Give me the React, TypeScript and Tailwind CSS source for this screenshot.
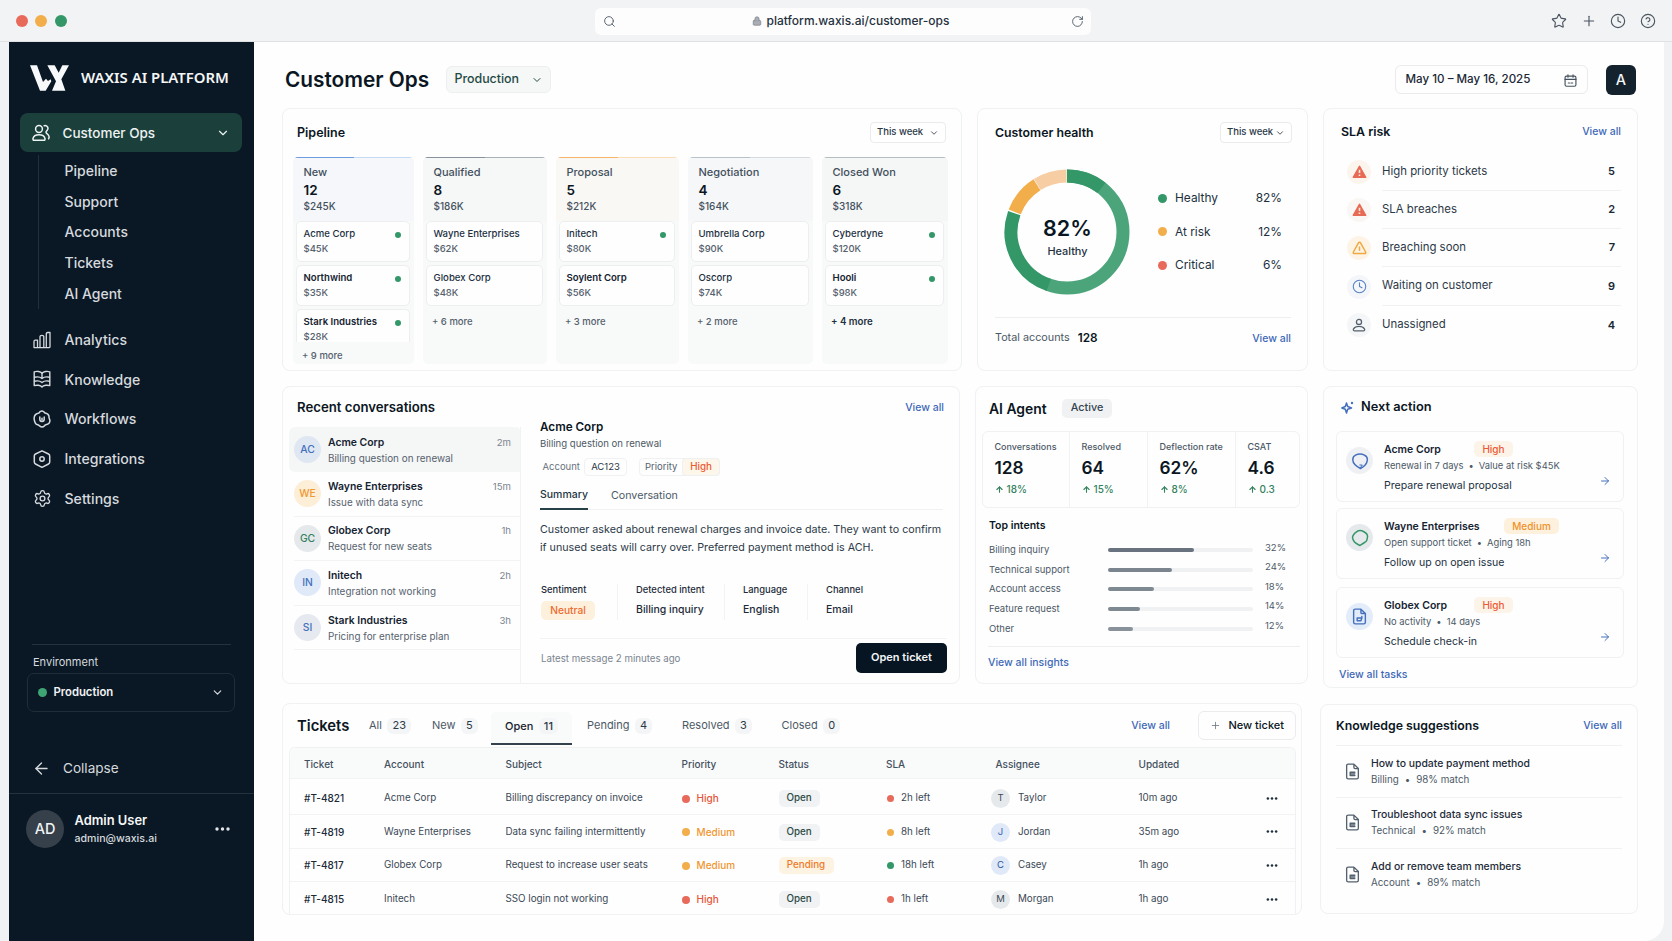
import type { ReactNode } from "react";
import {
  ArrowLeft,
  ArrowRight,
  ArrowUp,
  ChevronDown,
  CircleHelp,
  Clock,
  Lock,
  Plus,
  RotateCw,
  Search,
  Settings,
  Star,
} from "lucide-react";

const stages = [
  {
    name: "New",
    count: 12,
    total: "$245K",
    line: "bg-gradient-to-r from-[#6f9be0] from-50% to-[#c5daf5] to-50%",
    head: "bg-[#f5f7fa]",
    deals: [
      { name: "Acme Corp", value: "$45K", dot: true, strong: false },
      { name: "Northwind", value: "$35K", dot: true, strong: true },
      { name: "Stark Industries", value: "$28K", dot: true, strong: true },
    ],
    more: "+ 9 more",
  },
  {
    name: "Qualified",
    count: 8,
    total: "$186K",
    line: "bg-gradient-to-r from-[#87929c] from-50% to-[#a9b1b8] to-50%",
    head: "bg-[#f6f7f7]",
    deals: [
      { name: "Wayne Enterprises", value: "$62K", dot: false, strong: false },
      { name: "Globex Corp", value: "$48K", dot: false, strong: false },
    ],
    more: "+ 6 more",
  },
  {
    name: "Proposal",
    count: 5,
    total: "$212K",
    line: "bg-gradient-to-r from-[#f7b56a] from-50% to-[#fbdcb5] to-50%",
    head: "bg-[#faf8f4]",
    deals: [
      { name: "Initech", value: "$80K", dot: true, strong: false },
      { name: "Soylent Corp", value: "$56K", dot: false, strong: true },
    ],
    more: "+ 3 more",
  },
  {
    name: "Negotiation",
    count: 4,
    total: "$164K",
    line: "bg-gradient-to-r from-[#b9c2c9] from-50% to-[#d5dade] to-50%",
    head: "bg-[#f6f7f8]",
    deals: [
      { name: "Umbrella Corp", value: "$90K", dot: false, strong: false },
      { name: "Oscorp", value: "$74K", dot: false, strong: false },
    ],
    more: "+ 2 more",
  },
  {
    name: "Closed Won",
    count: 6,
    total: "$318K",
    line: "bg-[#b4bfc2]",
    head: "bg-[#f5f6f6]",
    deals: [
      { name: "Cyberdyne", value: "$120K", dot: true, strong: false },
      { name: "Hooli", value: "$98K", dot: true, strong: true },
    ],
    more: "+ 4 more",
  },
];

const health = [
  { label: "Healthy", value: "82%", color: "bg-[#339768]" },
  { label: "At risk", value: "12%", color: "bg-[#f2ae4b]" },
  { label: "Critical", value: "6%", color: "bg-[#e76a5a]" },
];

const slaRows = [
  { label: "High priority tickets", value: 5, icon: "alert", bg: "bg-[#fbf5ee]" },
  { label: "SLA breaches", value: 2, icon: "alert", bg: "bg-[#faf6f3]" },
  { label: "Breaching soon", value: 7, icon: "warn", bg: "bg-[#fdf4e6]" },
  { label: "Waiting on customer", value: 9, icon: "clock", bg: "bg-[#f4f6f9]" },
  { label: "Unassigned", value: 4, icon: "user", bg: "bg-[#f5f6f7]" },
];

const conversations = [
  { initials: "AC", name: "Acme Corp", text: "Billing question on renewal", time: "2m", color: "bg-[#dfe7f2] text-[#4470bd]" },
  { initials: "WE", name: "Wayne Enterprises", text: "Issue with data sync", time: "15m", color: "bg-[#fdeed8] text-[#f0982f]" },
  { initials: "GC", name: "Globex Corp", text: "Request for new seats", time: "1h", color: "bg-[#e6e9eb] text-[#35805f]" },
  { initials: "IN", name: "Initech", text: "Integration not working", time: "2h", color: "bg-[#dfe9f8] text-[#4470bd]" },
  { initials: "SI", name: "Stark Industries", text: "Pricing for enterprise plan", time: "3h", color: "bg-[#e6eaf0] text-[#4470bd]" },
];

const agentStats = [
  { label: "Conversations", value: "128", delta: "18%" },
  { label: "Resolved", value: "64", delta: "15%" },
  { label: "Deflection rate", value: "62%", delta: "8%" },
  { label: "CSAT", value: "4.6", delta: "0.3" },
];

const intents = [
  { label: "Billing inquiry", value: 32, width: 59, color: "bg-[#69737f]" },
  { label: "Technical support", value: 24, width: 44, color: "bg-[#7b858f]" },
  { label: "Account access", value: 18, width: 31.5, color: "bg-[#7f8992]" },
  { label: "Feature request", value: 14, width: 22, color: "bg-[#7f8992]" },
  { label: "Other", value: 12, width: 17, color: "bg-[#89929b]" },
];

const tickets = [
  { id: "#T-4821", account: "Acme Corp", subject: "Billing discrepancy on invoice", priority: "High", status: "Open", sla: "2h left", slaColor: "bg-[#e76a5a]", who: "Taylor", updated: "10m ago", avatar: "bg-[#e6e9ec] text-[#3b4856]" },
  { id: "#T-4819", account: "Wayne Enterprises", subject: "Data sync failing intermittently", priority: "Medium", status: "Open", sla: "8h left", slaColor: "bg-[#f2ae4b]", who: "Jordan", updated: "35m ago", avatar: "bg-[#dfe9f8] text-[#3b68b8]" },
  { id: "#T-4817", account: "Globex Corp", subject: "Request to increase user seats", priority: "Medium", status: "Pending", sla: "18h left", slaColor: "bg-[#339768]", who: "Casey", updated: "1h ago", avatar: "bg-[#dfe9f8] text-[#2d559c]" },
  { id: "#T-4815", account: "Initech", subject: "SSO login not working", priority: "High", status: "Open", sla: "1h left", slaColor: "bg-[#e76a5a]", who: "Morgan", updated: "1h ago", avatar: "bg-[#e6e9ec] text-[#3b4856]" },
];

const articles = [
  { title: "How to update payment method", meta: "Billing", match: "98% match" },
  { title: "Troubleshoot data sync issues", meta: "Technical", match: "92% match" },
  { title: "Add or remove team members", meta: "Account", match: "89% match" },
];

function Card({ className, children }: { className: string; children: ReactNode }) {
  return (
    <section className={`shrink-0 rounded-[8px] border border-[#eff1f2] bg-[#fefefe] ${className}`}>
      {children}
    </section>
  );
}

function ViewAll({ children = "View all" }: { children?: ReactNode }) {
  return <a className="block text-[10.5px] font-medium leading-4 text-[#4069b8]">{children}</a>;
}

function WeekSelect({ className }: { className: string }) {
  return (
    <button
      className={`mb-px flex h-[21px] items-center justify-between rounded-[4px] border border-[#e9ebed] bg-white pl-[6px] pr-[6px] text-[9.5px] font-medium text-[#2c3947] ${className}`}
    >
      This week
      <ChevronDown size={10} strokeWidth={2} />
    </button>
  );
}

/* icons */

function Logo() {
  return (
    <svg width="39" height="26" viewBox="0 0 117 76" fill="#f8f9fa">
      <path d="M0 0H21L39 50L48 40L54 47L62 42L64 48L47 76H30Z" />
      <path d="M52 0H74L86 22L97 0H117L94 42L106 76H66L78 48Z" />
    </svg>
  );
}

function StrokeIcon({ size = 18, width = 1.5, children }: { size?: number; width?: number; children: ReactNode }) {
  return (
    <svg
      width={size}
      height={size}
      viewBox="0 0 18 18"
      fill="none"
      stroke="currentColor"
      strokeWidth={width}
      strokeLinecap="round"
      strokeLinejoin="round"
    >
      {children}
    </svg>
  );
}

function UsersIcon() {
  return (
    <StrokeIcon>
      <circle cx="7" cy="5" r="3.4" />
      <path d="M2.3 16.3C1 16.3 .8 15.5 1 14.5C1.6 11.9 3.9 10.8 7 10.8S12.4 11.9 13 14.5C13.2 15.5 13 16.3 11.7 16.3Z" />
      <path d="M12.2 1.8C14 1.2 16 2.3 16 4.3C16 6 14.7 6.6 14.2 7.5C13.7 8.5 14.5 9.4 15.5 10.1C17 11.2 17.6 13.5 16.6 14.8" />
    </StrokeIcon>
  );
}

function AnalyticsIcon() {
  return (
    <StrokeIcon width={1.3}>
      <path d="M1 16.5V10.5C1 9.7 1.5 9.2 2.3 9.2H4.5V16.5M7 16.5V5.5C7 3.9 10.8 3.9 10.8 5.5V16.5M13.3 16.5V2.8C13.3 2 13.9 1.5 14.7 1.5H17V15.5C17 16.2 16.6 16.7 15.9 16.7H2.2C1.5 16.7 1 16.3 1 15.5" />
    </StrokeIcon>
  );
}

function KnowledgeIcon() {
  return (
    <StrokeIcon width={1.4}>
      <path d="M9 3.2C7.5 1.3 3.5 1 1.2 1.8V15.6C3.5 14.9 7.5 15 9 17C10.5 15 14.5 14.9 16.8 15.6V1.8C14.5 1 10.5 1.3 9 3.2Z" />
      <path d="M9 3.2V8.5M1.5 7.2C4 6.6 7.3 7 9 8.5C10.7 7 14 6.6 16.5 7.2M1.5 11.2C4 10.6 7.3 11 9 12.5C10.7 11 14 10.6 16.5 11.2" />
    </StrokeIcon>
  );
}

function WorkflowsIcon() {
  return (
    <StrokeIcon width={1.5}>
      <path d="M6 3C6.5 1.5 8 .8 9.2 .9C10.6 1 11.3 2 12 3C13.6 3.2 15.5 4 15.9 6C16.1 7 15.8 7.8 16.3 8.7C17 10 17 12 16 13.2C15 14.4 13.6 14.6 12.4 14.9C11.5 15.4 11 17 9 17.1C7.3 17.1 6.6 15.6 5.4 15C3.5 14.6 2.2 13.6 1.8 11.8C1.5 10.6 1 9.5 1.1 8C1.3 5.2 3.5 3.4 6 3Z" />
      <path d="M6.8 7V9.3C6.8 12.2 11.2 12.2 11.2 9.3V7M9 8.2V9.8" />
    </StrokeIcon>
  );
}

function IntegrationsIcon() {
  return (
    <StrokeIcon width={1.5}>
      <path d="M9 .8L15.5 4C16.3 4.4 16.7 5 16.7 5.9V12.1C16.7 13 16.3 13.6 15.5 14L9 17.3L2.5 14C1.7 13.6 1.3 13 1.3 12.1V5.9C1.3 5 1.7 4.4 2.5 4Z" />
      <circle cx="9" cy="9" r="2.2" />
    </StrokeIcon>
  );
}

function CalendarIcon() {
  return (
    <StrokeIcon size={13} width={1.6}>
      <rect x="1.5" y="3" width="15" height="14" rx="2" />
      <path d="M1.5 7.5H16.5M5.5 1V4.5M12.5 1V4.5M6 12.5H7.5M9.5 12.5H12" />
    </StrokeIcon>
  );
}

function AlertIcon() {
  return (
    <svg width="15" height="14" viewBox="0 0 15 14">
      <path d="M7.5 1.3L13.7 12.3H1.3Z" fill="#e76a55" stroke="#e76a55" strokeWidth="1.5" strokeLinejoin="round" />
      <path d="M7.5 4.8V8M7.5 9.6V11" stroke="#fbe9dd" strokeWidth="1.6" />
    </svg>
  );
}

function WarnIcon() {
  return (
    <svg width="15" height="14" viewBox="0 0 15 14" fill="none" stroke="#f0a93f" strokeWidth="1.5" strokeLinejoin="round">
      <path d="M6.6 1.7C7 1 8 1 8.4 1.7L13.6 11C14 11.8 13.6 12.5 12.8 12.5H2.2C1.4 12.5 1 11.8 1.4 11Z" />
      <path d="M7.5 5.5V9.8" />
    </svg>
  );
}

function UserIcon() {
  return (
    <StrokeIcon size={14} width={1.6}>
      <circle cx="9" cy="5" r="3.3" />
      <path d="M3 16.5C1.5 16.5 1.5 15 2 14C3.3 11.8 5.5 10.8 9 10.8S14.7 11.8 16 14C16.5 15 16.5 16.5 15 16.5Z" />
    </StrokeIcon>
  );
}

function ShieldIcon() {
  return (
    <StrokeIcon size={18} width={1.5}>
      <path d="M4.5 3.2C7 1.8 11 1.8 13.5 3.2C15.8 4.2 16.6 5.5 16.3 8C16.1 11.5 14.5 14 9.5 16.5C4.5 14 2 12 1.8 8C1.7 5.5 2.5 4.2 4.5 3.2Z" />
      <path d="M8.8 13H11.3L9.5 15.5" strokeWidth="1" />
    </StrokeIcon>
  );
}

function BubbleIcon() {
  return (
    <StrokeIcon size={18} width={1.5}>
      <path d="M5.5 2.8C7.5 1.3 10.5 1.3 12.5 2.5C15 3.8 16.8 6 16.5 8C16 9.5 16.5 11 15 12.5C13 14 11 15 9 16.5C7 15.5 5 14.8 3.5 13C2.5 11.5 1.5 10 1.5 8.5C1.5 6 3.5 4.3 5.5 2.8Z" />
    </StrokeIcon>
  );
}

function FileIcon({ size, width = 1.5, children }: { size: number; width?: number; children: ReactNode }) {
  return (
    <StrokeIcon size={size} width={width}>
      <path d="M10.5 1.2H4.5C3.5 1.2 2.8 1.9 2.8 2.9V15.1C2.8 16.1 3.5 16.8 4.5 16.8H13.5C14.5 16.8 15.2 16.1 15.2 15.1V5.9L10.5 1.2V4.7C10.5 5.5 11 5.9 11.7 5.9H15.2" />
      {children}
    </StrokeIcon>
  );
}

function SparkIcon() {
  return (
    <svg width="13" height="13" viewBox="0 0 13 13" fill="none" stroke="#4470bd" strokeWidth="1.5" strokeLinejoin="round">
      <path d="M5.5 2L6.7 5.5L10.5 7L6.7 8.3L5.5 12L4.3 8.3L.8 7L4.3 5.5Z" />
      <circle cx="11" cy="2" r="1.2" fill="#4470bd" stroke="none" />
    </svg>
  );
}

function Dots({ className }: { className: string }) {
  return (
    <svg width="15" height="4" viewBox="0 0 15 4" fill="currentColor" className={className}>
      <circle cx="2" cy="2" r="1.7" />
      <circle cx="7.5" cy="2" r="1.7" />
      <circle cx="13" cy="2" r="1.7" />
    </svg>
  );
}

const navItems = [
  { name: "Analytics", icon: <AnalyticsIcon /> },
  { name: "Knowledge", icon: <KnowledgeIcon /> },
  { name: "Workflows", icon: <WorkflowsIcon /> },
  { name: "Integrations", icon: <IntegrationsIcon /> },
  { name: "Settings", icon: <Settings size={19} strokeWidth={1.7} /> },
];

function BrowserBar() {
  return (
    <header className="flex h-[42px] items-center border-b border-[#dfe1e3] bg-[#f2f3f4]">
      <div className="flex w-[595px] gap-[7.5px] pl-[15.5px]">
        <span className="size-[12px] rounded-full bg-[#e76a5a]" />
        <span className="size-[12px] rounded-full bg-[#f2ae4b]" />
        <span className="size-[12px] rounded-full bg-[#339768]" />
      </div>
      <div className="mt-px flex h-[27px] w-[496px] items-center rounded-[6px] bg-[#fdfdfd] pl-[8px] pr-[7px] text-[#4f5a66]">
        <Search size={13} strokeWidth={1.7} />
        <div className="flex flex-1 items-center justify-center gap-[5px] pl-[14px]">
          <Lock size={10} strokeWidth={2} className="fill-[#a9aeb4] text-[#858c94]" />
          <span className="text-[12px] font-medium text-[#25313e]">platform.waxis.ai/customer-ops</span>
        </div>
        <RotateCw size={13} strokeWidth={1.7} />
      </div>
      <div className="ml-auto flex items-center gap-[13.7px] pr-[16px] text-[#4b5561]">
        <Star size={16} strokeWidth={1.7} />
        <Plus size={16} strokeWidth={1.7} />
        <Clock size={16} strokeWidth={1.7} />
        <CircleHelp size={16} strokeWidth={1.7} />
      </div>
    </header>
  );
}

function Sidebar() {
  return (
    <aside className="flex w-[245px] shrink-0 flex-col bg-[#0a1825] text-[#d6dade]">
      <div className="flex h-[71px] items-center gap-[12px] pl-[21px]">
        <Logo />
        <span className="font-['Noto_Sans'] text-[14.9px] font-semibold text-[#f4f6f7]">WAXIS AI PLATFORM</span>
      </div>
      <button className="mx-[11px] flex h-[39px] w-[222px] items-center rounded-[8px] bg-[#1b403b] pl-[12px] pr-[12px] text-[#eef2f2]">
        <UsersIcon />
        <span className="ml-[12.5px] pt-px text-[13.5px] font-medium">Customer Ops</span>
        <ChevronDown size={14} strokeWidth={2} className="ml-auto" />
      </button>
      <div className="ml-[29px] mt-[3px] flex h-[154px] border-l border-[#22303c] pl-[25.5px]">
        <ul className="text-[14px] font-medium">
          {["Pipeline", "Support", "Accounts", "Tickets", "AI Agent"].map((item) => (
            <li key={item} className="flex h-[30.8px] items-center">
              {item}
            </li>
          ))}
        </ul>
      </div>
      <nav className="mt-[11px] text-[14.1px] font-medium">
        {navItems.map((item) => (
          <a key={item.name} className="flex h-[39.6px] items-center pl-[24px]">
            <span className="flex w-[31.5px]">{item.icon}</span>
            {item.name}
          </a>
        ))}
      </nav>

      <div className="mx-[23px] mt-auto border-t border-[#24323e] pl-px pt-[9px] text-[11px] leading-4">Environment</div>
      <button className="ml-[18px] mt-[3px] flex h-[39px] w-[208px] items-center rounded-[7px] border border-[#1f2d39] pl-[10px] pr-[10px]">
        <span className="size-[9px] rounded-full bg-[#3fa474]" />
        <span className="ml-[6.5px] text-[11.3px] font-semibold text-[#f1f3f4]">Production</span>
        <ChevronDown size={13} strokeWidth={2.2} className="ml-auto" />
      </button>
      <button className="mt-[37px] flex h-[39px] items-center pl-[23px] text-[13.6px]">
        <ArrowLeft size={19} strokeWidth={1.7} />
        <span className="ml-[12px]">Collapse</span>
      </button>
      <div className="mt-[5px] flex h-[148px] items-start border-t border-[#24323e] pl-[17px] pt-[16px]">
        <span className="flex size-[38px] items-center justify-center rounded-full bg-[#36404b] text-[14.5px] font-medium text-[#f1f3f4]">
          AD
        </span>
        <div className="ml-[10.5px] pt-[2px]">
          <p className="text-[12.9px] font-semibold leading-[18px] text-[#f4f6f7]">Admin User</p>
          <p className="text-[10.6px] font-medium leading-[18px]">admin@waxis.ai</p>
        </div>
        <Dots className="ml-auto mr-[24px] mt-[17px] text-[#e3e6e8]" />
      </div>
    </aside>
  );
}

function Pipeline() {
  return (
    <Card className="h-[263px] w-[680px] pl-[10px]">
      <div className="flex h-[48px] items-center justify-between pl-[4px] pr-[15px]">
        <h2 className="text-[12.5px] font-semibold">Pipeline</h2>
        <WeekSelect className="w-[76px]" />
      </div>
      <div className="grid h-[207px] grid-cols-[121px_124px_123px_125px_126px] gap-[9px]">
        {stages.map((stage) => (
          <div key={stage.name} className="flex flex-col overflow-hidden rounded-[5px] bg-[#f8f9f9]">
            <div className={`h-px shrink-0 ${stage.line}`} />
            <div className={`h-[63px] shrink-0 pl-[10.5px] pt-[6px] ${stage.head}`}>
              <p className="text-[11px] font-medium leading-4 text-[#42505d]">{stage.name}</p>
              <p className="mt-px text-[13.5px] font-semibold leading-[18px]">{stage.count}</p>
              <p className="text-[10px] font-medium leading-[14px] text-[#44515e]">{stage.total}</p>
            </div>
            <div className="flex flex-col gap-[3px] overflow-hidden pl-[3px] pr-[4px]">
              {stage.deals.map((deal, i) => (
                <div
                  key={deal.name}
                  className={
                    i === 2
                      ? "h-[33px] rounded-t-[5px] border border-b-0 border-[#eceef0] bg-[#fefefe] pl-[6.5px] pr-[8.5px] pt-[4px]"
                      : "h-[41px] rounded-[5px] border border-[#eceef0] bg-[#fefefe] pl-[6.5px] pr-[8.5px] pt-[4px]"
                  }
                >
                  <div className="flex items-center justify-between">
                    <p
                      className={
                        deal.strong
                          ? "text-[9.6px] font-semibold leading-4 text-[#152331]"
                          : "text-[9.6px] font-medium leading-4 text-[#22303e]"
                      }
                    >
                      {deal.name}
                    </p>
                    {deal.dot && <span className="mt-[2px] size-[6px] rounded-full bg-[#339768]" />}
                  </div>
                  <p className="text-[9.5px] font-medium leading-[14px] text-[#55616d]">{deal.value}</p>
                </div>
              ))}
            </div>
            <p
              className={
                stage.name === "Closed Won"
                  ? "pl-[9px] pt-[7.5px] text-[9.7px] font-semibold leading-4 text-[#22303e]"
                  : stage.name === "New"
                    ? "pl-[9px] pt-[6.5px] text-[9.5px] font-medium leading-4 text-[#55616d]"
                    : "pl-[9px] pt-[7.5px] text-[9.5px] font-medium leading-4 text-[#55616d]"
              }
            >
              {stage.more}
            </p>
          </div>
        ))}
      </div>
    </Card>
  );
}

function Donut() {
  const length = 2 * Math.PI * 56;
  const arc = (from: number, to: number) => ({
    strokeDasharray: `${((to - from) / 360) * length} ${length}`,
    transform: `rotate(${from - 90} 63 63)`,
  });

  return (
    <div className="relative size-[126px]">
      <svg width="126" height="126" viewBox="0 0 126 126" fill="none" strokeWidth="13">
        <circle cx="63" cy="63" r="56" stroke="#4ca57a" {...arc(0, 200)} />
        <circle cx="63" cy="63" r="56" stroke="#339768" {...arc(0, 38)} />
        <circle cx="63" cy="63" r="56" stroke="#339768" {...arc(199, 289.5)} />
        <circle cx="63" cy="63" r="56" stroke="#f2ae4b" {...arc(291, 327.5)} />
        <circle cx="63" cy="63" r="56" stroke="#f7cda3" {...arc(328, 359.5)} />
      </svg>
      <div className="absolute inset-0 flex flex-col items-center pl-px pt-[44.5px]">
        <span className="text-[21.5px] font-semibold leading-[28px]">82%</span>
        <span className="text-[10.9px] font-medium leading-[18px] text-[#22303e]">Healthy</span>
      </div>
    </div>
  );
}

function CustomerHealth() {
  return (
    <Card className="h-[263px] w-[331px] pl-[17px] pr-[16px]">
      <div className="flex h-[48px] items-center justify-between">
        <h2 className="text-[12.3px] font-semibold">Customer health</h2>
        <WeekSelect className="-mr-px w-[72px]" />
      </div>
      <div className="flex h-[160px] items-start pl-[9px] pt-[12px]">
        <Donut />
        <ul className="ml-[28px] mt-[12.5px] w-[124px] text-[11.9px] text-[#22303e]">
          {health.map((item) => (
            <li key={item.label} className="flex h-[33.5px] items-center">
              <span className={`size-[9px] rounded-full ${item.color}`} />
              <span className="ml-[8px] flex-1">{item.label}</span>
              <span>{item.value}</span>
            </li>
          ))}
        </ul>
      </div>
      <div className="flex h-[42px] items-center border-t border-[#eceef0] text-[10.8px] text-[#4c5966]">
        Total accounts
        <span className="ml-[8px] flex-1 text-[11.8px] font-semibold text-[#0b1623]">128</span>
        <ViewAll />
      </div>
    </Card>
  );
}

function SlaRisk() {
  return (
    <Card className="h-[263px] w-[315px] pl-[17px] pr-[16px]">
      <div className="flex h-[46px] items-center justify-between">
        <h2 className="pt-px text-[12.4px] font-semibold">SLA risk</h2>
        <ViewAll />
      </div>
      <ul className="-mt-[2.5px] pl-[6px] text-[11.4px]">
        {slaRows.map((row, i) => (
          <li key={row.label} className="flex h-[38.3px] items-center">
            <span className={`flex size-[24px] items-center justify-center rounded-full ${row.bg}`}>
              {row.icon === "alert" && <AlertIcon />}
              {row.icon === "warn" && <WarnIcon />}
              {row.icon === "clock" && <Clock size={15} strokeWidth={1.7} className="text-[#5480c7]" />}
              {row.icon === "user" && (
                <span className="text-[#53606d]">
                  <UserIcon />
                </span>
              )}
            </span>
            <div
              className={
                i < slaRows.length - 1
                  ? "ml-[11px] flex h-full flex-1 items-center justify-between border-b border-[#eff1f2] pr-[6px]"
                  : "ml-[11px] flex h-full flex-1 items-center justify-between pr-[6px]"
              }
            >
              <span className="text-[#2c3947]">{row.label}</span>
              <span className="text-[11px] font-semibold text-[#1a2836]">{row.value}</span>
            </div>
          </li>
        ))}
      </ul>
    </Card>
  );
}

function RecentConversations() {
  return (
    <Card className="flex h-[298px] w-[678px] flex-col">
      <div className="flex h-[40px] shrink-0 items-center justify-between pl-[14px] pr-[15px] pt-px">
        <h2 className="text-[13.2px] font-semibold">Recent conversations</h2>
        <ViewAll />
      </div>
      <div className="flex min-h-0 flex-1">
        <ul className="w-[238px] shrink-0 border-r border-[#f0f2f3] pl-[6px]">
          {conversations.map((item, i) => (
            <li
              key={item.initials}
              className={
                i === 0
                  ? "flex h-[45px] items-center rounded-l-[6px] rounded-tr-[4px] bg-[#f5f6f6] pl-[5px] pr-[9px]"
                  : "ml-[5px] flex h-[44.6px] items-center border-b border-[#f1f3f4] pr-[9px]"
              }
            >
              <span className={`flex size-[27px] items-center justify-center rounded-full text-[10.3px] font-medium ${item.color}`}>
                {item.initials}
              </span>
              <div className="ml-[7px] flex-1 pt-[1px]">
                <div className="flex justify-between leading-[15px]">
                  <span className="text-[10.4px] font-semibold text-[#152331]">{item.name}</span>
                  <span className="text-[9.6px] text-[#7b8590]">{item.time}</span>
                </div>
                <p className="text-[9.9px] leading-4 text-[#56626e]">{item.text}</p>
              </div>
            </li>
          ))}
        </ul>
        <div className="min-w-0 flex-1 pl-[19px] pr-[16px]">
          <h3 className="-mt-[8.5px] text-[11.7px] font-semibold leading-[17px]">Acme Corp</h3>
          <p className="text-[9.6px] leading-4 text-[#4c5966]">Billing question on renewal</p>
          <div className="mt-[6.5px] flex h-[18px] items-center text-[9.5px]">
            <span className="w-[40px] pl-[2.5px] text-[#67727d]">Account</span>
            <span className="ml-[4px] flex h-[18px] w-[43px] items-center justify-center rounded-[4px] border border-[#f0f1f3] text-[#2c3947]">
              AC123
            </span>
            <div className="ml-[12px] flex h-[18px] w-[81px] items-center justify-between rounded-[4px] border border-[#f0f1f3] pl-[5px] text-[#56626e]">
              Priority
              <span className="-mr-px flex h-[18px] w-[38px] items-center justify-center rounded-[4px] border border-[#eef0f1] bg-[#fdf6ea] text-[9.8px] font-medium text-[#ec5a33]">
                High
              </span>
            </div>
          </div>
          <div className="mt-[6px] flex h-[28px] items-stretch gap-[23px] border-b border-[#eff1f2] text-[10.7px]">
            <span className="-mb-px flex items-center border-b-2 border-[#284048] text-[10.5px] font-medium text-[#22353f]">
              Summary
            </span>
            <span className="flex items-center pt-px text-[#4c5966]">Conversation</span>
          </div>
          <p className="mt-[11px] whitespace-nowrap text-[10.73px] leading-[18px] text-[#2c3947]">
            Customer asked about renewal charges and invoice date. They want to confirm
            <br />
            if unused seats will carry over. Preferred payment method is ACH.
          </p>
          <div className="mt-[27px] flex h-[36px] pl-px text-[10.5px] font-medium text-[#1d2b39]">
            <div className="w-[77px] border-r border-[#f2f3f4]">
              <p className="text-[9.4px] leading-[12px]">Sentiment</p>
              <p className="mt-[5px] flex h-[19px] w-[54px] items-center justify-center rounded-[5px] bg-[#fdf0dc] text-[10.2px] text-[#ee6c2f]">
                Neutral
              </p>
            </div>
            <div className="w-[107px] border-r border-[#f2f3f4] pl-[18px]">
              <p className="text-[9.4px] leading-[12px]">Detected intent</p>
              <p className="mt-[6px] leading-4">Billing inquiry</p>
            </div>
            <div className="w-[83px] border-r border-[#f2f3f4] pl-[18px]">
              <p className="text-[9.4px] leading-[12px]">Language</p>
              <p className="mt-[6px] leading-4">English</p>
            </div>
            <div className="pl-[18px]">
              <p className="text-[9.4px] leading-[12px]">Channel</p>
              <p className="mt-[6px] leading-4">Email</p>
            </div>
          </div>
          <div className="-mr-[4px] mt-[18px] flex items-center justify-between border-t border-[#f1f3f4] pl-px pt-[4px]">
            <span className="pt-[3px] text-[9.7px] text-[#7b8590]">Latest message 2 minutes ago</span>
            <button className="h-[30px] w-[91px] rounded-[5px] bg-[#071522] pb-px text-[11px] font-semibold text-[#f4f6f7]">
              Open ticket
            </button>
          </div>
        </div>
      </div>
    </Card>
  );
}

function AgentPanel() {
  return (
    <Card className="h-[298px] w-[333px] pl-[6px] pr-[7px]">
      <div className="flex h-[44px] items-center pl-[7px]">
        <h2 className="w-[58px] whitespace-nowrap text-[13.9px] font-semibold">AI Agent</h2>
        <span className="mb-px ml-[15px] flex h-[19px] w-[50px] items-center justify-center rounded-[5px] bg-[#eff1f2] text-[10.8px] font-medium text-[#34434f]">
          Active
        </span>
      </div>
      <div className="grid h-[77px] grid-cols-[87px_78px_88px_64px] divide-x divide-[#eff1f2] rounded-[6px] border border-[#eff1f2]">
        {agentStats.map((stat) => (
          <div key={stat.label} className="pl-[11.5px] pt-[8px]">
            <p className="whitespace-nowrap text-[9px] font-medium leading-[14px] text-[#4c5966]">{stat.label}</p>
            <p className="mt-[3px] text-[17.3px] font-semibold leading-[22px]">{stat.value}</p>
            <p className="mt-[2px] flex items-center gap-[3px] text-[10px] font-medium leading-[16px] text-[#35825f]">
              <ArrowUp size={9} strokeWidth={3} />
              {stat.delta}
            </p>
          </div>
        ))}
      </div>
      <div className="pl-[7px]">
        <h3 className="mt-[10px] text-[10.5px] font-semibold leading-4">Top intents</h3>
        <ul className="mt-[6.5px] text-[9.5px] text-[#4c5966]">
          {intents.map((item) => (
            <li key={item.label} className="flex h-[19.6px] items-center">
              <span className="w-[119px]">{item.label}</span>
              <span className="h-[4px] w-[145px] rounded-full bg-[#f0f1f3]">
                <span className={`block h-full rounded-full ${item.color}`} style={{ width: `${item.width}%` }} />
              </span>
              <span className="mb-[5px] ml-[12px]">{item.value}%</span>
            </li>
          ))}
        </ul>
        <div className="-ml-px mt-[7.5px] border-t border-[#eceef0] pt-[8px]">
          <ViewAll>View all insights</ViewAll>
        </div>
      </div>
    </Card>
  );
}

const actions = [
  {
    name: "Acme Corp",
    tag: "High",
    detail: ["Renewal in 7 days", "Value at risk $45K"],
    action: "Prepare renewal proposal",
    icon: <ShieldIcon />,
    color: "bg-[#eef0f3] text-[#4470bd]",
    wrap: "",
  },
  {
    name: "Wayne Enterprises",
    tag: "Medium",
    detail: ["Open support ticket", "Aging 18h"],
    action: "Follow up on open issue",
    icon: <BubbleIcon />,
    color: "bg-[#e6e9ec] text-[#339768]",
    wrap: "mt-[6px]",
  },
  {
    name: "Globex Corp",
    tag: "High",
    detail: ["No activity", "14 days"],
    action: "Schedule check-in",
    icon: (
      <FileIcon size={17}>
        <path d="M6.5 10.5H11.5L10.5 13.5H6.5ZM11.5 10.5V9" />
      </FileIcon>
    ),
    color: "bg-[#e3ecf9] text-[#4470bd]",
    wrap: "mt-[8px]",
  },
];

function NextAction() {
  return (
    <Card className="h-[302px] w-[315px] pl-[12px] pr-[13px]">
      <div className="flex h-[44px] items-center gap-[7px] pb-[4px] pl-[5px]">
        <SparkIcon />
        <h2 className="text-[12.8px] font-semibold">Next action</h2>
      </div>
      {actions.map((item) => (
        <div key={item.name} className={`flex h-[71px] rounded-[6px] border border-[#eff1f2] ${item.wrap}`}>
          <span className={`ml-[9px] mt-[15px] flex size-[27px] shrink-0 items-center justify-center rounded-full ${item.color}`}>
            {item.icon}
          </span>
          <div className="ml-[11px] w-[215px] pt-[9px]">
            <div className="flex h-4 items-center">
              <span
                className={
                  item.tag === "High"
                    ? "w-[90px] pt-px text-[10.5px] font-semibold text-[#152331]"
                    : "w-[120px] pt-px text-[10.5px] font-semibold text-[#152331]"
                }
              >
                {item.name}
              </span>
              <span
                className={
                  item.tag === "High"
                    ? "flex h-4 w-[39px] items-center justify-center rounded-[5px] bg-[#fdf4e9] text-[10px] font-medium text-[#ec5a33]"
                    : "flex h-4 w-[55px] items-center justify-center rounded-[5px] bg-[#fdf0dc] text-[10px] font-medium text-[#f0922b]"
                }
              >
                {item.tag}
              </span>
            </div>
            <p className="mt-px text-[9.4px] leading-4 text-[#4c5966]">
              {item.detail[0]}
              <span className="mx-[5px]">•</span>
              {item.detail[1]}
            </p>
            <p className="mt-[3.5px] text-[10.55px] leading-4 text-[#22303e]">{item.action}</p>
          </div>
          <ArrowRight size={12} strokeWidth={2} className="mt-[43px] text-[#4470bd]" />
        </div>
      ))}
      <div className="pl-[3px] pt-[9px]">
        <ViewAll>View all tasks</ViewAll>
      </div>
    </Card>
  );
}

const tabs = [
  { name: "All", count: 23, width: "w-[63px]" },
  { name: "New", count: 5, width: "w-[59px]" },
  { name: "Open", count: 11, width: "w-[81px]" },
  { name: "Pending", count: 4, width: "w-[110px] pl-[15px]" },
  { name: "Resolved", count: 3, width: "w-[99.5px]" },
  { name: "Closed", count: 0, width: "w-[70px]" },
];

const columns =
  "grid grid-cols-[80px_121.5px_176px_97px_107.5px_109.5px_143px_127px_1fr] items-center pl-[14px]";

function Tickets() {
  return (
    <Card className="h-[212px] w-[1020px] overflow-hidden pl-[6px] pr-[5px]">
      <div className="flex h-[43px] pl-[8px]">
        <h2 className="flex w-[72px] items-center pt-px text-[14.8px] font-semibold">Tickets</h2>
        <div className="flex flex-1 text-[11px] text-[#4c5966]">
          {tabs.map((tab) => (
            <div
              key={tab.name}
              className={
                tab.name === "Open"
                  ? "mt-[8px] flex h-[33px] w-[81px] items-center justify-center rounded-t-[5px] border-b-2 border-[#34424f] bg-[#f9fafa] pb-[3px] font-medium text-[#14222f]"
                  : `flex items-center ${tab.width}`
              }
            >
              {tab.name}
              <span className="ml-[5.5px] flex h-[16px] min-w-[16px] items-center justify-center rounded-[6px] bg-[#f4f5f6] px-[5px] text-[#2c3947]">
                {tab.count}
              </span>
            </div>
          ))}
        </div>
        <div className="flex items-center">
          <ViewAll />
          <button className="ml-[28px] flex h-[29px] w-[98px] items-center justify-center gap-[7.5px] rounded-[6px] border border-[#e9ebed] text-[11px] font-medium">
            <Plus size={11} strokeWidth={1.7} className="text-[#67727d]" />
            New ticket
          </button>
        </div>
      </div>
      <div className="h-[169px] rounded-t-[6px] border border-b-0 border-[#eff1f2]">
        <div className={`${columns} h-[31px] rounded-t-[6px] border-b border-[#f1f3f4] bg-[#f9fafa] pt-[2px] text-[10px] font-medium text-[#44515e]`}>
          <span>Ticket</span>
          <span>Account</span>
          <span>Subject</span>
          <span>Priority</span>
          <span>Status</span>
          <span>SLA</span>
          <span>Assignee</span>
          <span>Updated</span>
        </div>
        {tickets.map((ticket, i) => (
          <div
            key={ticket.id}
            className={`${columns} border-b border-[#f1f3f4] text-[9.8px] text-[#3b4856] last:border-b-0 ${i === 0 ? "h-[36px] pt-[4px]" : "h-[33.5px] pt-[1.5px]"}`}
          >
            <span className="text-[10px] font-medium text-[#1d2b39]">{ticket.id}</span>
            <span>{ticket.account}</span>
            <span>{ticket.subject}</span>
            <span
              className={
                ticket.priority === "High"
                  ? "flex items-center gap-[7px] text-[10px] font-medium text-[#e5573a]"
                  : "flex items-center gap-[7px] text-[10px] font-medium text-[#f0962f]"
              }
            >
              <span className={ticket.priority === "High" ? "size-[8px] rounded-full bg-[#e76a5a]" : "size-[8px] rounded-full bg-[#f2ae4b]"} />
              {ticket.priority}
            </span>
            <span
              className={
                ticket.status === "Open"
                  ? "flex h-[17px] w-[41px] items-center justify-center rounded-[5px] bg-[#f0f2f3] font-medium text-[#2c4a46]"
                  : "flex h-[17px] w-[55px] items-center justify-center rounded-[5px] bg-[#fdf3e2] font-medium text-[#ee7a2b]"
              }
            >
              {ticket.status}
            </span>
            <span className="flex items-center gap-[7px] pl-px">
              <span className={`size-[7px] rounded-full ${ticket.slaColor}`} />
              {ticket.sla}
            </span>
            <span className="-ml-[4.5px] flex items-center gap-[8px]">
              <span className={`flex size-[19px] items-center justify-center rounded-full text-[9.5px] ${ticket.avatar}`}>
                {ticket.who[0]}
              </span>
              {ticket.who}
            </span>
            <span>{ticket.updated}</span>
            <Dots className="-mt-px h-[3px] w-[12px] text-[#22303e]" />
          </div>
        ))}
      </div>
    </Card>
  );
}

function KnowledgeSuggestions() {
  return (
    <Card className="mt-px h-[210px] w-[318px] px-[15px]">
      <div className="flex h-[41px] items-center justify-between border-b border-[#eff1f2] pt-[2px]">
        <h2 className="text-[12.3px] font-semibold">Knowledge suggestions</h2>
        <ViewAll />
      </div>
      {articles.map((item) => (
        <div key={item.title} className="flex h-[51.5px] items-center border-b border-[#eff1f2] pl-[8px] last:border-b-0">
          <span className="text-[#53606d]">
            <FileIcon size={17} width={1.4}>
              <path d="M6.5 9.8H11.5M6.5 13.2H11.5M6.5 9.8V13.2M6.5 11.5H11.5" />
            </FileIcon>
          </span>
          <div className="ml-[10px] pt-px">
            <p className="text-[10.4px] font-medium leading-4 text-[#1d2b39]">{item.title}</p>
            <p className="text-[9.8px] leading-4 text-[#4c5966]">
              {item.meta}
              <span className="mx-[6px]">•</span>
              {item.match}
            </p>
          </div>
        </div>
      ))}
    </Card>
  );
}

export default function App() {
  return (
    <div className="flex h-[941px] w-[1672px] flex-col overflow-hidden bg-[#f1f2f4] font-['Inter',sans-serif] text-[#0b1623] antialiased">
      <BrowserBar />
      <div className="flex min-h-0 flex-1 pl-[9px] pr-[8px]">
        <Sidebar />
        <main className="min-w-0 flex-1 rounded-br-[20px] bg-[#fefefe] pl-[28px]">
          <div className="flex h-[66px] items-start pr-[28px] pt-[23px]">
            <h1 className="ml-[3px] w-[144px] whitespace-nowrap text-[20.8px] font-semibold leading-[29px]">Customer Ops</h1>
            <button className="ml-[16.5px] mt-[1px] flex h-[27px] w-[105px] items-center justify-between rounded-[6px] border border-[#eceeef] bg-[#f6f7f7] pl-[8px] pr-[7px] text-[12.4px] font-medium text-[#1f4a44]">
              Production
              <ChevronDown size={12} strokeWidth={2} />
            </button>
            <button className="ml-auto flex h-[29px] w-[193px] items-center justify-between rounded-[6px] border border-[#e9ebed] pl-[10px] pr-[10px] pt-px text-[11.6px] font-medium text-[#1a2836]">
              May 10 – May 16, 2025
              <span className="text-[#44515e]">
                <CalendarIcon />
              </span>
            </button>
            <span className="ml-[18.5px] flex size-[30px] items-center justify-center rounded-[6px] bg-[#14222e] pb-px text-[14.5px] font-medium text-[#f4f6f7]">
              A
            </span>
          </div>
          <div className="flex gap-[15px]">
            <Pipeline />
            <CustomerHealth />
            <SlaRisk />
          </div>
          <div className="mt-[15px] flex items-start gap-[15px]">
            <RecentConversations />
            <AgentPanel />
            <NextAction />
          </div>
          <div className="mt-[15px] flex items-start gap-[18px]">
            <Tickets />
            <KnowledgeSuggestions />
          </div>
        </main>
      </div>
    </div>
  );
}
